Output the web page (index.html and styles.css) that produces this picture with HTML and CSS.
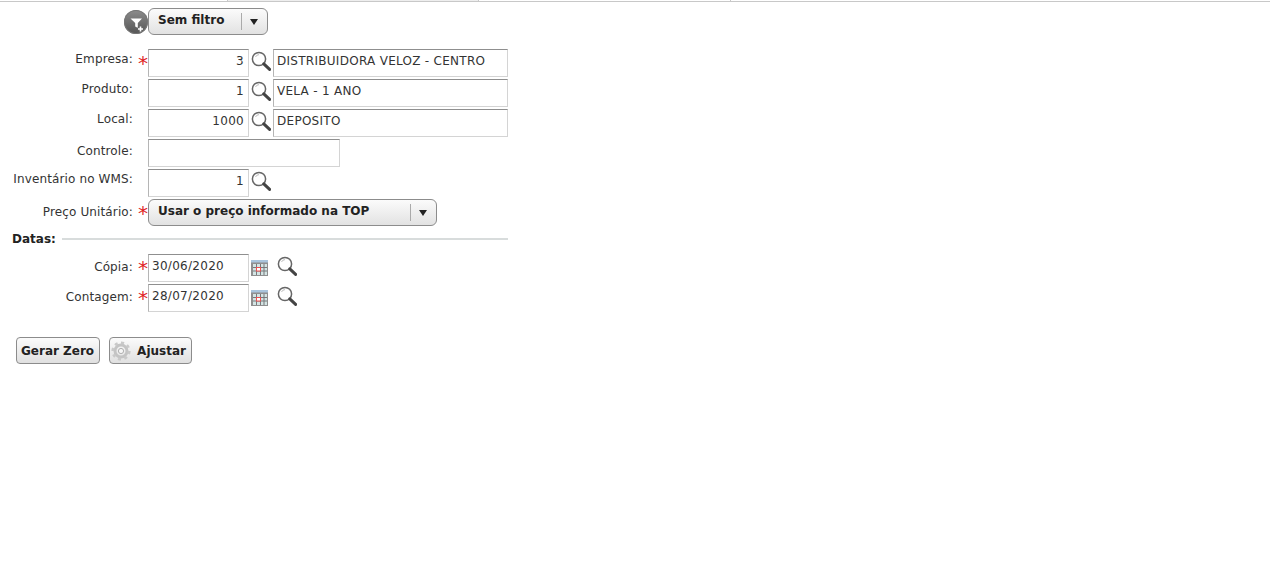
FILE: index.html
```html
<!DOCTYPE html>
<html lang="pt-BR">
  <head>
    <meta charset="UTF-8" />
    <title>Inventário</title>
    <link rel="stylesheet" href="styles.css">
  </head>
  <body>
    <svg class="defs" width="0" height="0">
      <symbol id="lupa" viewBox="0 0 20 20">
        <circle cx="8" cy="8" r="6.6" fill="#fff" stroke="#666" stroke-width="1.5" />
        <path d="M4.5 6 A4 4 0 0 1 8 3.6" fill="none" stroke="#bbb" stroke-width="1" />
        <path d="M12.8 12.8 L18.6 18.4" stroke="#444" stroke-width="3" stroke-linecap="round" />
      </symbol>
      <symbol id="calendario" viewBox="0 0 17 16">
        <rect x="0" y="0" width="17" height="16" fill="#8f8f8f" />
        <rect x="0" y="0" width="17" height="2.5" fill="#a9c4dc" />
        <path d="M2 4h14v11H2z" fill="#d4e4e4" />
        <path d="M5.5 4v11M9.5 4v11M13 4v11M2 7.5h14M2 11h14" stroke="#77797b" stroke-width="1" />
        <rect x="5.5" y="7.5" width="4" height="3.5" fill="#fff" stroke="#ee5050" stroke-width="1" />
      </symbol>
    </svg>

    <div class="topbar">
      <span class="aba aba-1"></span>
      <span class="aba aba-2"></span>
      <span class="aba aba-3"></span>
    </div>

    <div class="filtro">
      <span class="filtro-icone">
        <svg width="24" height="24" viewBox="0 0 24 24">
          <path d="M6.5 8.5h11.5l-4.2 4.6v5l-2.6-1.7v-3.3z" fill="#fff" />
          <path d="M16.5 16v6M13.5 19h6" stroke="#666" stroke-width="3.2" />
          <path d="M16.5 16.5v5M14 19h5" stroke="#fff" stroke-width="1.6" />
        </svg>
      </span>
      <div class="combo combo-filtro">
        <span class="combo-texto">Sem filtro</span>
        <span class="combo-seta"></span>
      </div>
    </div>

    <form class="form">
      <div class="linha">
        <label class="rotulo">Empresa:</label>
        <span class="obrig">*</span>
        <input class="campo campo-cod" type="text" value="3" />
        <svg class="lupa"><use href="#lupa" /></svg>
        <input class="campo campo-desc" type="text" value="DISTRIBUIDORA VELOZ - CENTRO" />
      </div>
      <div class="linha">
        <label class="rotulo">Produto:</label>
        <span class="obrig"></span>
        <input class="campo campo-cod" type="text" value="1" />
        <svg class="lupa"><use href="#lupa" /></svg>
        <input class="campo campo-desc" type="text" value="VELA - 1 ANO" />
      </div>
      <div class="linha">
        <label class="rotulo">Local:</label>
        <span class="obrig"></span>
        <input class="campo campo-cod" type="text" value="1000" />
        <svg class="lupa"><use href="#lupa" /></svg>
        <input class="campo campo-desc" type="text" value="DEPOSITO" />
      </div>
      <div class="linha">
        <label class="rotulo rotulo-baixo">Controle:</label>
        <span class="obrig"></span>
        <input class="campo campo-controle" type="text" />
      </div>
      <div class="linha">
        <label class="rotulo">Inventário no WMS:</label>
        <span class="obrig"></span>
        <input class="campo campo-cod" type="text" value="1" />
        <svg class="lupa"><use href="#lupa" /></svg>
      </div>
      <div class="linha">
        <label class="rotulo rotulo-preco">Preço Unitário:</label>
        <span class="obrig">*</span>
        <div class="combo combo-preco">
          <span class="combo-texto">Usar o preço informado na TOP</span>
          <span class="combo-seta"></span>
        </div>
      </div>

      <div class="secao">
        <span class="secao-titulo">Datas:</span>
        <span class="secao-linha"></span>
      </div>

      <div class="linha linha-data">
        <label class="rotulo">Cópia:</label>
        <span class="obrig">*</span>
        <input class="campo campo-data" type="text" value="30/06/2020" />
        <svg class="calendario"><use href="#calendario" /></svg>
        <svg class="lupa lupa-data"><use href="#lupa" /></svg>
      </div>
      <div class="linha linha-data">
        <label class="rotulo">Contagem:</label>
        <span class="obrig">*</span>
        <input class="campo campo-data" type="text" value="28/07/2020" />
        <svg class="calendario"><use href="#calendario" /></svg>
        <svg class="lupa lupa-data"><use href="#lupa" /></svg>
      </div>

      <div class="botoes">
        <button type="button" class="botao">Gerar Zero</button>
        <button type="button" class="botao botao-icone">
          <svg width="20" height="20" viewBox="0 0 20 20">
            <circle cx="10" cy="10" r="6" fill="none" stroke="#c4c4c4" stroke-width="3" />
            <circle cx="10" cy="10" r="8.2" fill="none" stroke="#c9c9c9" stroke-width="2.8" stroke-dasharray="3 3.4" />
            <circle cx="10" cy="10" r="2.6" fill="#f6f6f6" stroke="#b0b0b0" />
          </svg>
          Ajustar
        </button>
      </div>
    </form>
  </body>
</html>
```

FILE: styles.css
```css
html,
body {
  margin: 0;
  background-color: white;
}
body {
  font-family: "DejaVu Sans", Verdana, sans-serif;
  font-size: 12px;
  color: #333;
}
.defs {
  position: absolute;
}

.topbar {
  display: flex;
  height: 1px;
  border-bottom: 1px solid #c8c8c8;
}
.aba {
  height: 1px;
  border-right: 1px solid #c8c8c8;
}
.aba-1 {
  width: 227px;
}
.aba-2 {
  width: 250px;
  background-color: #eee;
}
.aba-3 {
  width: 251px;
}

.filtro {
  display: flex;
  align-items: center;
  margin-top: 6px;
  padding-left: 124px;
}
.filtro-icone {
  display: block;
  width: 24px;
  height: 24px;
  border-radius: 50%;
  background: linear-gradient(#8c8c8c, #555);
  box-shadow: inset 0 0 0 1px #777;
}
.filtro-icone svg {
  display: block;
}

.combo {
  display: flex;
  align-items: center;
  box-sizing: border-box;
  height: 27px;
  border: 1px solid #8c8c8c;
  border-radius: 6px;
  background: linear-gradient(#fbfbfb, #e2e2e2);
  font-weight: bold;
  color: #222;
}
.combo-filtro {
  width: 120px;
}
.combo-preco {
  width: 289px;
}
.combo-texto {
  flex: 1;
  padding-left: 9px;
  padding-bottom: 3px;
}
.combo-seta {
  position: relative;
  width: 25px;
  height: 17px;
  border-left: 1px solid #aaa;
}
.combo-seta::after {
  content: "";
  position: absolute;
  left: 8px;
  top: 6px;
  border-left: 4.5px solid transparent;
  border-right: 4.5px solid transparent;
  border-top: 6px solid #222;
}

.form {
  margin-top: 14px;
}
.linha {
  display: flex;
  align-items: flex-start;
  height: 30px;
}
.rotulo {
  width: 133px;
  text-align: right;
  line-height: 20px;
  letter-spacing: 0.13px;
  white-space: nowrap;
}
.rotulo-baixo {
  padding-top: 2px;
}
.rotulo-preco {
  padding-top: 3px;
}
.obrig {
  width: 15px;
  padding-top: 4px;
  padding-left: 5px;
  box-sizing: border-box;
  color: #e01f26;
  font-size: 20px;
  line-height: 20px;
}

.campo {
  box-sizing: border-box;
  height: 28px;
  margin: 0;
  padding: 0 4px 5px 3px;
  border: 1px solid #d4d4d4;
  border-top-color: #8f8f8f;
  border-left-color: #b5b5b5;
  font-family: inherit;
  font-size: 12px;
  letter-spacing: 0.28px;
  color: #333;
  background-color: white;
  outline: none;
}
.campo-cod {
  width: 101px;
  text-align: right;
}
.campo-desc {
  width: 235px;
}
.campo-controle {
  width: 192px;
}
.campo-data {
  width: 101px;
}

.lupa {
  flex: none;
  width: 20px;
  height: 20px;
  margin: 2px 2px 0;
}
.calendario {
  flex: none;
  width: 17px;
  height: 16px;
  margin: 6px 0 0 2px;
}
.lupa-data {
  margin: 2px 0 0 9px;
}

.secao {
  display: flex;
  align-items: center;
  width: 508px;
  height: 27px;
  padding: 0 0 4px 12px;
  box-sizing: border-box;
  margin-top: -2px;
}
.secao-titulo {
  font-weight: bold;
  font-size: 12px;
  color: #222;
}
.secao-linha {
  flex: 1;
  height: 2px;
  margin-left: 6px;
  background-color: #d8dcdc;
}
.linha-data .rotulo {
  line-height: 26px;
}

.botoes {
  display: flex;
  gap: 9px;
  margin-top: 23px;
  padding-left: 16px;
}
.botao {
  display: flex;
  align-items: center;
  gap: 6px;
  box-sizing: border-box;
  height: 27px;
  padding: 0 5px 0 4px;
  border: 1px solid #8c8c8c;
  border-radius: 4px;
  background: linear-gradient(#fbfbfb, #e0e0e0);
  font-family: inherit;
  font-size: 12px;
  font-weight: bold;
  color: #222;
}
.botao-icone {
  padding-left: 1px;
}
```
